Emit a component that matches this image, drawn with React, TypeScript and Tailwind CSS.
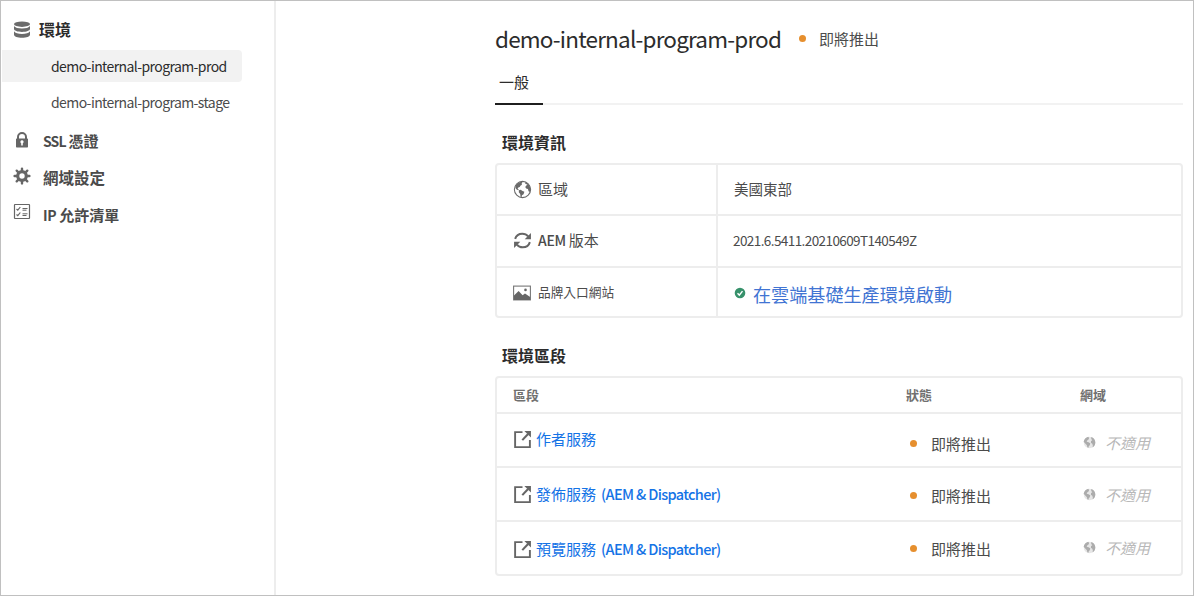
import type { ReactNode } from "react";

type IconProps = { className?: string };

function DatabaseIcon({ className = "" }: IconProps) {
  return (
    <svg viewBox="0 0 18 18" className={className} fill="#6b6b6b">
      <ellipse cx="9" cy="3.2" rx="8" ry="2.7" />
      <path d="M1 4.900c1 1.700 4.300 2.500 8 2.500s7-.8 8-2.500v3.200c0 1.600-3.600 2.900-8 2.900S1 9.700 1 8.100z" />
      <path d="M1 10.300c1 1.800 4.300 2.700 8 2.700s7-.9 8-2.700v3.500c0 1.700-3.600 3-8 3s-8-1.300-8-3z" />
    </svg>
  );
}

function LockIcon({ className = "" }: IconProps) {
  return (
    <svg viewBox="0 0 18 18" className={className}>
      <path d="M5 8V6a4 4 0 0 1 8 0v2" fill="none" stroke="#666" strokeWidth="2" />
      <path
        fillRule="evenodd"
        fill="#666"
        d="M3.700 7.500h10.600a.7.7 0 0 1 .7.700v7.600a.7.7 0 0 1-.7.700H3.700a.7.7 0 0 1-.7-.7V8.200a.7.7 0 0 1 .7-.7zM9 9.300a1.600 1.600 0 0 0-.8 3V14.600h1.600V12.300A1.600 1.600 0 0 0 9 9.300z"
      />
    </svg>
  );
}

function GearIcon({ className = "" }: IconProps) {
  return (
    <svg viewBox="0 0 18 18" className={className}>
      <circle cx="9" cy="9" r="4.300" fill="none" stroke="#666" strokeWidth="3.200" />
      <g stroke="#666" strokeWidth="2.400" strokeLinecap="round">
        <path d="M9 1.600v2M9 14.400v2M1.600 9h2M14.400 9h2M3.700 3.700l1.400 1.400M12.900 12.900l1.400 1.400M3.700 14.300l1.400-1.400M12.900 5.100l1.400-1.400" />
      </g>
    </svg>
  );
}

function ChecklistIcon({ className = "" }: IconProps) {
  return (
    <svg viewBox="0 0 18 18" className={className} fill="none" stroke="#666">
      <rect x="1.500" y="1.500" width="15" height="14" rx="0.500" strokeWidth="1.200" />
      <path d="M3.500 6l1.300 1.200L7.300 4M3.500 11.500l1.300 1.200 2.500-3.200" strokeWidth="1.200" />
      <path d="M9.500 5.500h5M9.500 7.200h4M9.500 10.800h5M9.500 12.500h4" strokeWidth="1" />
    </svg>
  );
}

function GlobeIcon({ className = "" }: IconProps) {
  return (
    <svg viewBox="0 0 18 18" className={className}>
      <circle cx="9" cy="9" r="7.700" fill="none" stroke="#6a6a6a" strokeWidth="1" />
      <path
        fill="#6a6a6a"
        d="M2.300 6C3.200 3.700 5.200 2.200 7.800 1.600l1.300.7-1 1.200.4 1.100-1.500.8-.6 1.200-1.400.6-.6 1.200 1.200.9-.6.500-1.600-.9L2.200 7.500z"
      />
      <path fill="#6a6a6a" d="M5.600 9.600l1.700-.4 1.700 1.200 1.800.8-.8 2.200-1.500 1.100-.4 1.900-.9-.5-.4-2.700-1.300-1.700z" />
      <path fill="#6a6a6a" d="M11.600 2.200c2.800 1.100 4.700 3.500 5 6.400l-.6 2.700-1.300-.7-.5-2-1.700-.5-.9-1.500 1-1.500 1.100-.5-1.400-.8-1-.7z" />
    </svg>
  );
}

function SmallGlobeIcon({ className = "" }: IconProps) {
  return (
    <svg viewBox="0 0 12 12" className={className}>
      <circle cx="6" cy="6" r="5.300" fill="#e6e6e6" />
      <path fill="#acacac" d="M.6 5.400C1 3 2.600 1.200 4.800.7l.8 1.100-.3 1.300-1.400 1-.5 1.200 1.800.4 1.600 1.300-.6 1.600-1 1-.1 1.300-1.100-.5-.4-1.800-1.300-1.500z" />
      <path fill="#acacac" d="M7.600.9c2.300.7 3.800 2.700 3.800 5.100 0 2-1 3.600-2.600 4.500l.3-1.800-.5-1.600-1.300-.9.1-1.500 1.200-.8-1-1.200z" />
    </svg>
  );
}

function RefreshIcon({ className = "" }: IconProps) {
  return (
    <svg viewBox="0 0 18 18" className={className}>
      <path d="M2 7.500C3 4.300 5.700 2.500 8.800 2.500c2.400 0 4.300 1 5.600 2.600M16 10.500c-1 3.200-3.700 5-6.800 5-2.400 0-4.300-1-5.600-2.600" fill="none" stroke="#666" strokeWidth="1.900" />
      <path fill="#666" d="M17 1.800v5.900h-5.900zM1 16.200v-5.900h5.900z" />
    </svg>
  );
}

function ImageIcon({ className = "" }: IconProps) {
  return (
    <svg viewBox="0 0 18 16" className={className}>
      <rect x="0.600" y="1.100" width="16.800" height="13.800" fill="none" stroke="#777" strokeWidth="1.100" />
      <circle cx="12.500" cy="4.900" r="1.300" fill="#666" />
      <path fill="#666" d="M1 10.500L5.600 6l4 4.200L12 8.500l5.200 3.500v3H1z" />
    </svg>
  );
}

function OpenIcon({ className = "" }: IconProps) {
  return (
    <svg viewBox="0 0 18 18" className={className}>
      <path d="M9 2H2v14.200h14V9.500" fill="none" stroke="#666" strokeWidth="1.800" />
      <path d="M8.800 9.600l5.500-5.800" stroke="#666" strokeWidth="2" />
      <path fill="#666" d="M10.800 1H17v6.200z" />
    </svg>
  );
}

function CheckIcon({ className = "" }: IconProps) {
  return (
    <svg viewBox="0 0 12 12" className={className}>
      <circle cx="6" cy="6" r="5.300" fill="#37916b" />
      <path d="M3.500 6.300l1.800 1.800 3.200-4" fill="none" stroke="#fff" strokeWidth="1.400" />
    </svg>
  );
}

function Dot() {
  return <span className="block size-[7px] shrink-0 rounded-full bg-[#e68f2e]" />;
}

function NavItem({ icon, children }: { icon: ReactNode; children: ReactNode }) {
  return (
    <li className="flex h-[37px] items-center">
      <span className="w-[30px] shrink-0">{icon}</span>
      {children}
    </li>
  );
}

function InfoRow({ icon, label, children }: { icon: ReactNode; label: ReactNode; children: ReactNode }) {
  return (
    <div className="flex h-[51.300px] border-b-2 border-[#ededed] last:border-b-0">
      <div className="flex w-[221px] shrink-0 items-center border-r-2 border-[#ededed] pl-4">
        <span className="w-[25px] shrink-0">{icon}</span>
        <span className="flex pb-0.5">{label}</span>
      </div>
      <div className="flex items-center pl-[15px]">{children}</div>
    </div>
  );
}

type SegmentProps = { name: string; suffix?: string; linkPad: string; statusPad: string; domainPad: string };

function SegmentRow({ name, suffix, linkPad, statusPad, domainPad }: SegmentProps) {
  return (
    <div className="flex h-[54px] items-center border-t-2 border-[#ededed] text-[15px]">
      <div className={`flex w-[413px] items-center pl-4 ${linkPad}`}>
        <OpenIcon className="size-[19px]" />
        <a className="pl-1 text-[#1473e6]">
          {name}
          {suffix && <span className="pl-[5px] text-[14.500px] font-medium tracking-[-0.650px]">{suffix}</span>}
        </a>
      </div>
      <div className={`flex w-[173px] items-center gap-[14px] ${statusPad}`}>
        <Dot />
        <span className="pt-0.5 text-[#4b4b4b]">即將推出</span>
      </div>
      <div className={`flex items-center gap-[9px] text-[#b8b8b8] ${domainPad}`}>
        <SmallGlobeIcon className="size-[13px]" />
        <span className="pt-0.5 italic">不適用</span>
      </div>
    </div>
  );
}

export default function App() {
  return (
    <div className="flex h-[596px] w-[1194px] overflow-hidden border border-[#c0c0c0] bg-white font-['Noto_Sans_CJK_TC',sans-serif] leading-5 whitespace-nowrap text-[#4b4b4b]">
      <aside className="w-[275px] shrink-0 border-r-2 border-[#ededed] pt-[18px]">
        <div className="flex h-[22px] items-center gap-2 pl-3 text-base font-bold text-[#2c2c2c]">
          <DatabaseIcon className="size-[18px]" />
          <span className="pb-0.5">環境</span>
        </div>
        <ul className="mt-[9px] text-sm tracking-[-0.590px]">
          <li className="ml-px flex h-8 w-[240px] items-center rounded-r bg-[#f2f2f2] pl-[49px] text-[#2c2c2c]">demo-internal-program-prod</li>
          <li className="mt-1 flex h-8 items-center pl-[50px]">demo-internal-program-stage</li>
        </ul>
        <ul className="mt-1 pl-3 text-[15.500px] font-bold">
          <NavItem icon={<LockIcon className="mb-0.5 size-[18px]" />}>
            <span className="pr-[3px] text-sm tracking-[-0.900px]">SSL</span>
            <span className="text-[15px]">憑證</span>
          </NavItem>
          <NavItem icon={<GearIcon className="mb-1 size-[18px]" />}>
            <span className="pb-0.5">網域設定</span>
          </NavItem>
          <NavItem icon={<ChecklistIcon className="mb-1.5 size-[18px]" />}>
            <span className="pr-[3px] text-sm tracking-[-0.300px]">IP</span>
            <span className="text-[15px]">允許清單</span>
          </NavItem>
        </ul>
      </aside>

      <main className="w-[907px] pt-[22px] pl-[219px]">
        <header className="flex h-8 items-center">
          <h1 className="pb-0.5 text-[22.500px] tracking-[-0.800px] text-[#2c2c2c]">demo-internal-program-prod</h1>
          <div className="flex items-center gap-[13px] pb-px pl-[18px] text-[15px]">
            <Dot />
            <span className="pt-px">即將推出</span>
          </div>
        </header>

        <nav className="mt-3 flex h-[38px] border-b-2 border-[#f2f2f2] text-[15px] text-[#2c2c2c]">
          <span className="-mb-0.5 w-12 border-b-2 border-[#1f1f1f] pt-[5px] pl-1">一般</span>
        </nav>

        <h2 className="mt-[25px] pl-[7px] text-base font-bold text-[#2c2c2c]">環境資訊</h2>
        <section className="mt-[9px] h-[155px] overflow-hidden rounded border-2 border-[#ededed] text-[15px]">
          <InfoRow icon={<GlobeIcon className="size-[19px]" />} label="區域">
            <span className="pb-0.5 pl-px text-[14.500px]">美國東部</span>
          </InfoRow>
          <InfoRow
            icon={<RefreshIcon className="size-[19px]" />}
            label={
              <>
                <span className="pr-[3px] text-sm leading-5 font-medium tracking-[-0.300px]">AEM</span>版本
              </>
            }
          >
            <span className="pb-px text-[13.500px] tracking-[-0.580px]">2021.6.5411.20210609T140549Z</span>
          </InfoRow>
          <InfoRow icon={<ImageIcon className="h-4 w-[18px]" />} label={<span className="text-[12.700px]">品牌入口網站</span>}>
            <CheckIcon className="ml-px size-3" />
            <a className="pt-px pl-[7px] text-[18.100px] text-[#4174d3]">在雲端基礎生產環境啟動</a>
          </InfoRow>
        </section>

        <h2 className="mt-[25px] pl-[7px] text-base font-bold text-[#2c2c2c]">環境區段</h2>
        <section className="mt-[9px] h-[200px] overflow-hidden rounded border-2 border-[#ededed]">
          <div className="flex h-[34px] items-center pb-px text-[13px] font-bold text-[#707070]">
            <span className="w-[409px] pl-4">區段</span>
            <span className="w-[174px]">狀態</span>
            <span>網域</span>
          </div>
          <SegmentRow name="作者服務" linkPad="pb-0.5" statusPad="pt-1.5" domainPad="pt-1" />
          <SegmentRow name="發佈服務" suffix="(AEM & Dispatcher)" linkPad="pb-0" statusPad="pt-0.5" domainPad="pt-0" />
          <SegmentRow name="預覽服務" suffix="(AEM & Dispatcher)" linkPad="pt-0.5" statusPad="pt-0" domainPad="pb-0.5" />
        </section>
      </main>
    </div>
  );
}
